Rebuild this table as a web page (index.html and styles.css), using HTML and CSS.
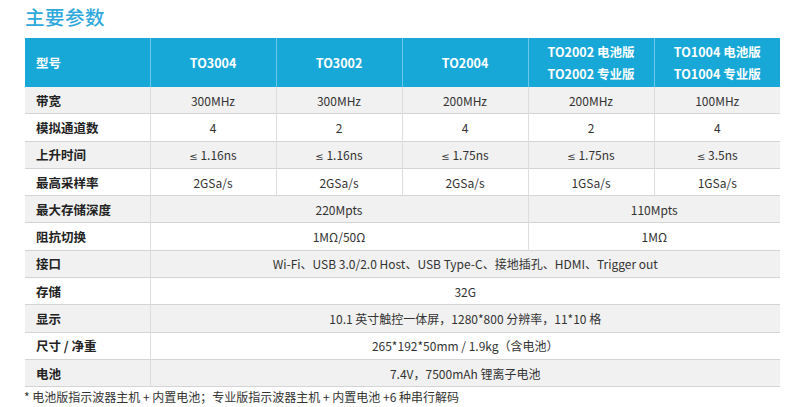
FILE: index.html
```html
<!DOCTYPE html>
<html lang="zh-CN">
<head>
<meta charset="utf-8">
<title>主要参数</title>
<link rel="stylesheet" href="styles.css">
</head>
<body>
<div class="page">
  <h1 class="title">主要参数</h1>
  <table class="spec">
    <colgroup>
      <col class="c-first"><col class="c"><col class="c"><col class="c"><col class="c"><col class="c">
    </colgroup>
    <thead>
      <tr>
        <th class="lead">型号</th>
        <th>TO3004</th>
        <th>TO3002</th>
        <th>TO2004</th>
        <th><span class="line">TO2002 电池版</span><span class="line">TO2002 专业版</span></th>
        <th><span class="line">TO1004 电池版</span><span class="line">TO1004 专业版</span></th>
      </tr>
    </thead>
    <tbody>
      <tr class="odd"><td class="lead">带宽</td><td>300MHz</td><td>300MHz</td><td>200MHz</td><td>200MHz</td><td>100MHz</td></tr>
      <tr><td class="lead">模拟通道数</td><td>4</td><td>2</td><td>4</td><td>2</td><td>4</td></tr>
      <tr class="odd"><td class="lead">上升时间</td><td><span class="le">≤</span> 1.16ns</td><td><span class="le">≤</span> 1.16ns</td><td><span class="le">≤</span> 1.75ns</td><td><span class="le">≤</span> 1.75ns</td><td><span class="le">≤</span> 3.5ns</td></tr>
      <tr><td class="lead">最高采样率</td><td>2GSa/s</td><td>2GSa/s</td><td>2GSa/s</td><td>1GSa/s</td><td>1GSa/s</td></tr>
      <tr class="odd"><td class="lead">最大存储深度</td><td colspan="3">220Mpts</td><td colspan="2">110Mpts</td></tr>
      <tr><td class="lead">阻抗切换</td><td colspan="3">1MΩ/50Ω</td><td colspan="2">1MΩ</td></tr>
      <tr class="odd"><td class="lead">接口</td><td colspan="5">Wi-Fi、USB 3.0/2.0 Host、USB Type-C、接地插孔、HDMI、Trigger out</td></tr>
      <tr><td class="lead">存储</td><td colspan="5">32G</td></tr>
      <tr class="odd"><td class="lead">显示</td><td colspan="5">10.1 英寸触控一体屏，1280*800 分辨率，11*10 格</td></tr>
      <tr><td class="lead">尺寸 / 净重</td><td colspan="5">265*192*50mm / 1.9kg（含电池）</td></tr>
      <tr class="odd"><td class="lead">电池</td><td colspan="5">7.4V，7500mAh 锂离子电池</td></tr>
    </tbody>
  </table>
  <p class="note">* 电池版指示波器主机 + 内置电池；专业版指示波器主机 + 内置电池 +6 种串行解码</p>
</div>
</body>
</html>
```

FILE: styles.css
```css
html, body {
  margin: 0;
  padding: 0;
  background: #ffffff;
}
body {
  font-family: "Noto Sans CJK SC", "Noto Sans", sans-serif;
  color: #2b2b2b;
}
.page {
  padding: 0 10px 0 25px;
}
.title {
  margin: 0;
  height: 38px;
  font-size: 19.5px;
  line-height: 34px;
  font-weight: 500;
  color: #2fa9dc;
  letter-spacing: 0.5px;
}
.spec {
  border-collapse: collapse;
  table-layout: fixed;
  width: 755px;
}
.c-first { width: 125px; }
.c { width: 126px; }
.spec th {
  background: #18a8d8;
  color: #ffffff;
  font-size: 12.5px;
  font-weight: 700;
  height: 49px;
  padding: 0;
  text-align: center;
  border-left: 1px solid #6cc8e8;
  line-height: 22px;
}
.spec th:first-child { border-left: none; }
.spec th.lead { text-align: left; padding-left: 11px; }
.line { display: block; }
.spec td {
  height: 26.3px;
  padding: 0;
  font-size: 12px;
  text-align: center;
  border-top: 1px solid #d4d4d4;
  border-left: 1px solid #dddddd;
  color: #333333;
}
.le {
  font-family: "DejaVu Sans", "Noto Sans", sans-serif;
  font-size: 10px;
}
.spec tbody tr:first-child td { border-top: none; }
.spec td.lead {
  text-align: left;
  padding-left: 11px;
  font-weight: 700;
  font-size: 12.5px;
  border-left: none;
  color: #222222;
}
.spec tr.odd td { background: #f1f1f1; }
.spec tbody tr:last-child td { border-bottom: 1px solid #d4d4d4; }
.note {
  margin: 0;
  font-size: 12px;
  line-height: 20px;
  color: #333333;
  margin-left: -1px;
}
```
